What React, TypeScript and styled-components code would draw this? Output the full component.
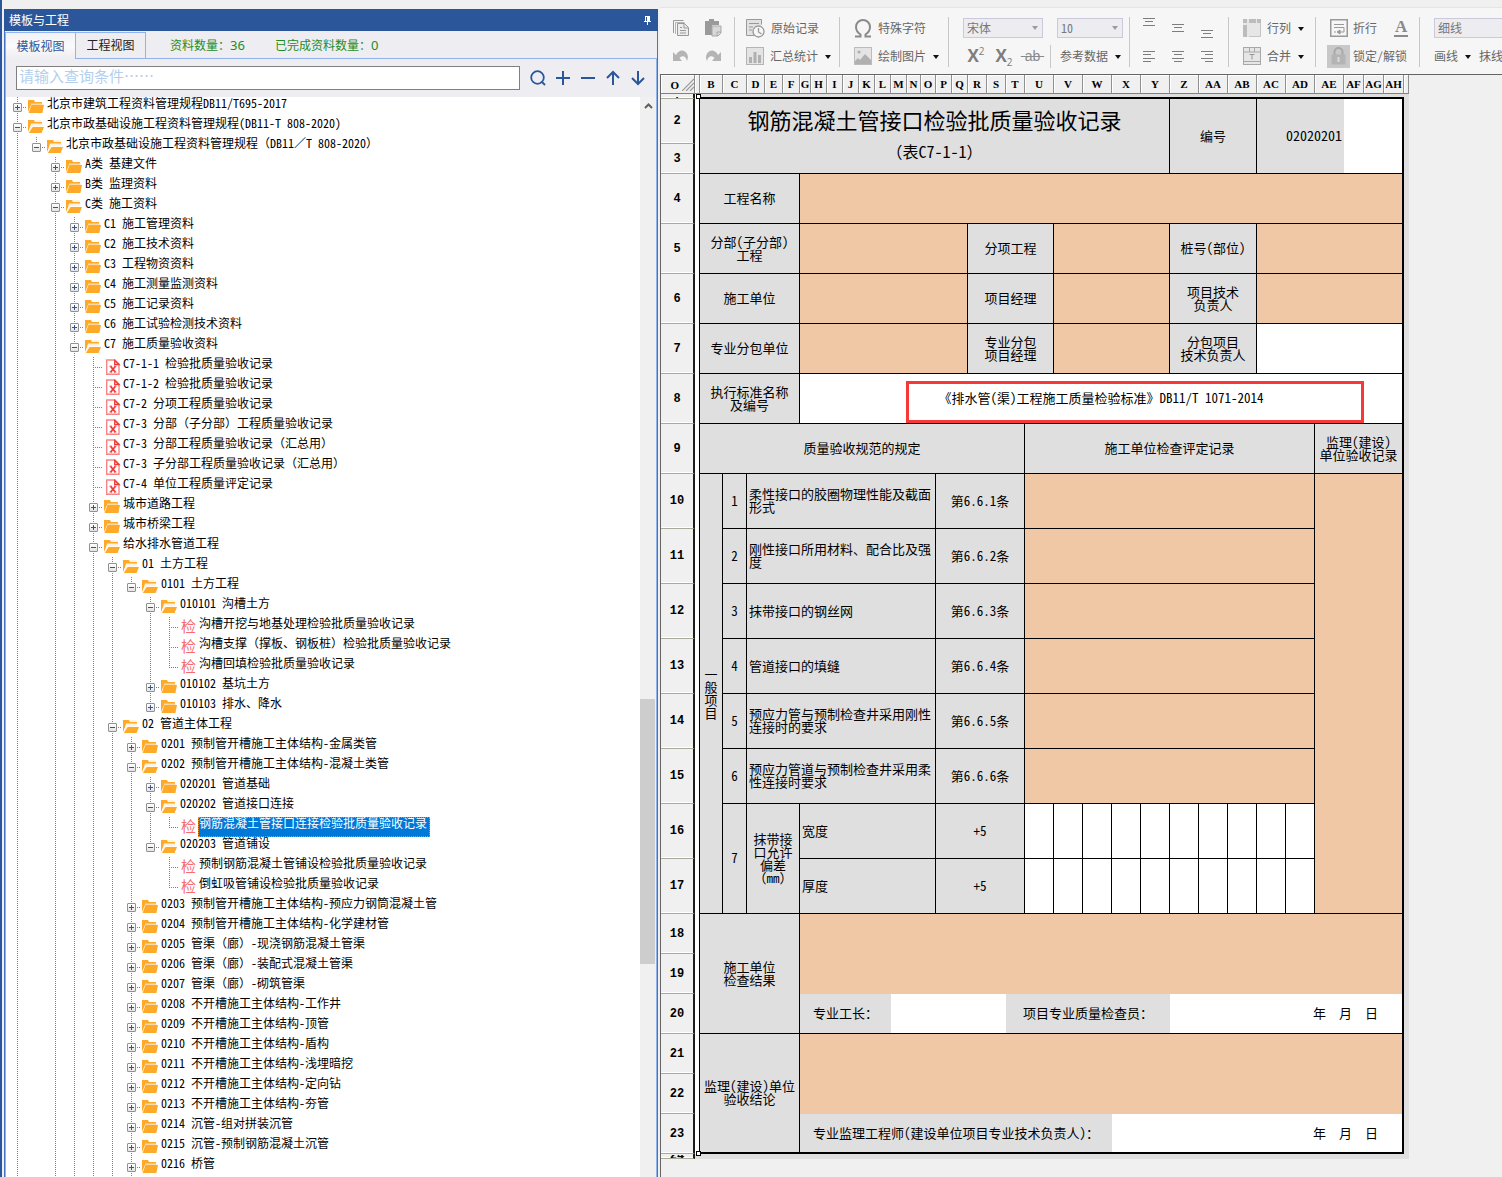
import React, { useState } from "react";
import styled, { createGlobalStyle, css } from "styled-components";

const sans = `"Noto Sans Mono CJK SC", "Noto Sans CJK SC", sans-serif`;
const blue = "#2b579a";
const lightBlue = "#8fb3ea";
const peach = "#f0c8a5";
const grey = "#dfdfdf";

const GlobalStyle = createGlobalStyle`
  *, *::before, *::after { box-sizing: border-box; }
  body { margin: 0; background: #f0f0f0; color: #000; font-family: ${sans}; font-size: 12px; overflow: hidden; }
  button, input, select { font: inherit; color: inherit; margin: 0; }
  button { border: 0; padding: 0; background: none; display: inline-flex; align-items: center; cursor: pointer; white-space: nowrap; }
  svg { display: block; flex: none; }
`;

/* ---------- shell ---------- */

const Shell = styled.div`
  display: grid;
  grid-template-columns: 658px minmax(0, 1fr);
  min-height: 100vh;
`;

const Side = styled.aside`
  display: flex;
  flex-direction: column;
  border-left: 2px solid ${blue};
  padding: 9px 0 0 2px;
  min-width: 0;
`;

const SideTitle = styled.header`
  display: flex;
  align-items: center;
  justify-content: space-between;
  height: 22px;
  padding: 0 6px 0 5px;
  background: ${blue};
  color: #fff;
  font-size: 12px;
`;

const PanelTitle = styled.h1`
  margin: 0;
  font-size: 12px;
  font-weight: 400;
  line-height: 20px;
`;

const SideBody = styled.div`
  flex: 1;
  display: flex;
  flex-direction: column;
  border: solid #4472c4;
  border-width: 0 1px;
  background: #eeeef2;
`;

const TabBar = styled.div`
  display: flex;
  height: 28px;
  padding-top: 1px;
  color: #1e8c1e;
`;

const Tab = styled.button<{ $active?: boolean }>`
  width: ${(p) => (p.$active ? 71 : 70)}px;
  justify-content: center;
  padding-bottom: 2px;
  border: 1px solid ${lightBlue};
  ${(p) =>
    p.$active
      ? css`
          color: ${blue};
          border-bottom: 0;
          background: linear-gradient(#f2f2f6, #fafafc 50%, #eeeef2);
        `
      : css`
          color: #222;
        `}
  & + & {
    border-left: 0;
  }
`;

const Stats = styled.div`
  flex: 1;
  display: flex;
  align-items: center;
  gap: 30px;
  padding-left: 24px;
  border-bottom: 1px solid ${lightBlue};
`;

const Stat = styled.span`
  line-height: 16px;
  white-space: nowrap;
  & > b {
    font: 400 13px/16px "Noto Sans", sans-serif;
  }
`;

const SearchRow = styled.div`
  display: flex;
  align-items: center;
  height: 38px;
  padding: 0 6px 0 10px;
  border-left: 1px solid ${lightBlue};
  border-right: 1px solid ${lightBlue};
`;

const SearchInput = styled.input`
  flex: 1;
  min-width: 0;
  height: 24px;
  margin-right: 5px;
  padding: 0 2px 6px;
  border: 1px solid #7f7f7f;
  border-radius: 0;
  background: #fff;
  font-size: 15px;
  line-height: 16px;
  outline: none;
  &::placeholder {
    color: #b4cfee;
    opacity: 1;
  }
`;

const SearchTool = styled.button`
  width: 25px;
  height: 24px;
  justify-content: center;
  color: ${blue};
`;

const TreeArea = styled.div`
  flex: 1;
  display: flex;
  border-left: 1px solid ${lightBlue};
  border-right: 1px solid ${lightBlue};
  background: #fff;
`;

const Tree = styled.ul`
  flex: 1;
  min-width: 0;
  margin: 0;
  padding: 0 0 0 2px;
  list-style: none;
`;

const ScrollTrack = styled.div`
  display: flex;
  flex-direction: column;
  width: 16px;
  background: #f0f0f0;
`;

const ScrollArrow = styled.button`
  justify-content: center;
  height: 18px;
  color: #606060;
`;

const TrackSpace = styled.div<{ $grow: number }>`
  flex: ${(p) => p.$grow} 0 0;
`;

const Thumb = styled(TrackSpace)`
  margin-right: 1px;
  background: #cdcdcd;
`;

/* ---------- tree ---------- */

const dotsDown = "repeating-linear-gradient(to bottom, #808080 0 1px, transparent 1px 2px)";
const dotsRight = "repeating-linear-gradient(to right, #808080 0 1px, transparent 1px 2px)";

const TreeRow = styled.li`
  display: flex;
  height: 20px;
  white-space: nowrap;
`;

const Guide = styled.span<{ $line: boolean }>`
  flex: 0 0 19px;
  background: ${(p) => (p.$line ? `${dotsDown} 9px 0 / 1px 100% no-repeat` : "none")};
`;

const Joint = styled.span<{ $last: boolean }>`
  flex: 0 0 19px;
  display: flex;
  align-items: flex-start;
  padding: 6px 0 0 5px;
  background: ${dotsDown} 9px 0 / 1px ${(p) => (p.$last ? "10px" : "100%")} no-repeat,
    ${dotsRight} 9px 10px / 10px 1px no-repeat;
`;

const Expander = styled.button`
  width: 9px;
  height: 9px;
  justify-content: center;
  border: 1px solid #919191;
  border-radius: 1px;
  background: linear-gradient(#fff, #e4e4e4);
  color: ${blue};
`;

const NodeIcon = styled.span`
  flex: 0 0 19px;
  padding: 2px 0 0 1px;
`;

const CheckMark = styled.span`
  display: block;
  padding-left: 1px;
  font-size: 15px;
  line-height: 14px;
  color: #f56c6c;
`;

const Label = styled.span<{ $selected?: boolean }>`
  height: 20px;
  padding: 0 3px 0 1px;
  line-height: 12px;
  ${(p) =>
    p.$selected &&
    css`
      background: #0078d7;
      color: #fff;
      outline: 1px dotted #f08a24;
      outline-offset: -1px;
    `}
`;

type Kind = "closed" | "open" | "file" | "check";
type Node = [level: number, kind: Kind, label: string];

const nodes: Node[] = [
  [0, "closed", "北京市建筑工程资料管理规程DB11/T695-2017"],
  [0, "open", "北京市政基础设施工程资料管理规程(DB11-T 808-2020)"],
  [1, "open", "北京市政基础设施工程资料管理规程（DB11／T 808-2020）"],
  [2, "closed", "A类 基建文件"],
  [2, "closed", "B类 监理资料"],
  [2, "open", "C类 施工资料"],
  [3, "closed", "C1 施工管理资料"],
  [3, "closed", "C2 施工技术资料"],
  [3, "closed", "C3 工程物资资料"],
  [3, "closed", "C4 施工测量监测资料"],
  [3, "closed", "C5 施工记录资料"],
  [3, "closed", "C6 施工试验检测技术资料"],
  [3, "open", "C7 施工质量验收资料"],
  [4, "file", "C7-1-1 检验批质量验收记录"],
  [4, "file", "C7-1-2 检验批质量验收记录"],
  [4, "file", "C7-2 分项工程质量验收记录"],
  [4, "file", "C7-3 分部（子分部）工程质量验收记录"],
  [4, "file", "C7-3 分部工程质量验收记录（汇总用）"],
  [4, "file", "C7-3 子分部工程质量验收记录（汇总用）"],
  [4, "file", "C7-4 单位工程质量评定记录"],
  [4, "closed", "城市道路工程"],
  [4, "closed", "城市桥梁工程"],
  [4, "open", "给水排水管道工程"],
  [5, "open", "01 土方工程"],
  [6, "open", "0101 土方工程"],
  [7, "open", "010101 沟槽土方"],
  [8, "check", "沟槽开挖与地基处理检验批质量验收记录"],
  [8, "check", "沟槽支撑（撑板、钢板桩）检验批质量验收记录"],
  [8, "check", "沟槽回填检验批质量验收记录"],
  [7, "closed", "010102 基坑土方"],
  [7, "closed", "010103 排水、降水"],
  [5, "open", "02 管道主体工程"],
  [6, "closed", "0201 预制管开槽施工主体结构-金属类管"],
  [6, "open", "0202 预制管开槽施工主体结构-混凝土类管"],
  [7, "closed", "020201 管道基础"],
  [7, "open", "020202 管道接口连接"],
  [8, "check", "钢筋混凝土管接口连接检验批质量验收记录"],
  [7, "open", "020203 管道铺设"],
  [8, "check", "预制钢筋混凝土管铺设检验批质量验收记录"],
  [8, "check", "倒虹吸管铺设检验批质量验收记录"],
  [6, "closed", "0203 预制管开槽施工主体结构-预应力钢筒混凝土管"],
  [6, "closed", "0204 预制管开槽施工主体结构-化学建材管"],
  [6, "closed", "0205 管渠（廊）-现浇钢筋混凝土管渠"],
  [6, "closed", "0206 管渠（廊）-装配式混凝土管渠"],
  [6, "closed", "0207 管渠（廊）-砌筑管渠"],
  [6, "closed", "0208 不开槽施工主体结构-工作井"],
  [6, "closed", "0209 不开槽施工主体结构-顶管"],
  [6, "closed", "0210 不开槽施工主体结构-盾构"],
  [6, "closed", "0211 不开槽施工主体结构-浅埋暗挖"],
  [6, "closed", "0212 不开槽施工主体结构-定向钻"],
  [6, "closed", "0213 不开槽施工主体结构-夯管"],
  [6, "closed", "0214 沉管-组对拼装沉管"],
  [6, "closed", "0215 沉管-预制钢筋混凝土沉管"],
  [6, "closed", "0216 桥管"],
];

// Levels that go on below the last visible row.
const openBelow = [0, 2, 3, 4, 5, 6];

function continues(index: number, level: number) {
  for (let i = index + 1; i < nodes.length; i++) {
    if (nodes[i][0] === level) return true;
    if (nodes[i][0] < level) return false;
  }
  return openBelow.includes(level);
}

function NodeGlyph({ kind }: { kind: Kind }) {
  if (kind === "check") return <CheckMark aria-hidden="true">检</CheckMark>;
  if (kind === "file")
    return (
      <svg width="17" height="16" viewBox="0 0 17 16" fill="none">
        <path d="M2.700 1H11l4 4v10.300H2.700z" stroke="#f78585" strokeWidth="1.4" />
        <path d="M10.700 1.500v4H15z" stroke="#ee3b3b" strokeWidth="1.3" />
        <path d="M6.700 7.500l4.600 5.500M11.300 7.500l-4.600 5.500" stroke="#ee3b3b" strokeWidth="1.8" />
        <path d="M5.500 7.200h2.600M10 7.200h2.400M5.500 13h2.600M10 13h2.400" stroke="#ee3b3b" />
      </svg>
    );
  return (
    <svg width="16" height="15" viewBox="0 0 16 15">
      <path d="M0 1h6l1 2h7v3H3L0 13z" fill="#ffa929" />
      {kind === "closed" ? (
        <>
          <path d="M3 5.2h12" stroke="#fde5c4" strokeWidth="1.2" />
          <path d="M3.400 6H16l-1.600 8H.6z" fill="#ffa929" />
        </>
      ) : (
        <>
          <path d="M6 1.500h7.500v1H7z" fill="#fde5c4" />
          <path d="M3 4.600h11.500v3H4L1 13z" fill="#fff3e0" />
          <path d="M4.600 8H16l-2.400 6H.8z" fill="#ffa929" />
        </>
      )}
    </svg>
  );
}

function ProjectTree() {
  const [selected, setSelected] = useState(36);
  return (
    <Tree role="tree" aria-label="模板视图">
      {nodes.map(([level, kind, label], i) => (
        <TreeRow key={i} role="treeitem" aria-level={level + 1} aria-selected={i === selected} onClick={() => setSelected(i)}>
          {Array.from({ length: level }, (_, l) => (
            <Guide key={l} $line={continues(i, l)} />
          ))}
          <Joint $last={!continues(i, level)}>
            {(kind === "closed" || kind === "open") && (
              <Expander aria-label={label}>
                <svg width="7" height="7" viewBox="0 0 7 7" stroke="currentColor">
                  <path d={kind === "closed" ? "M1 3.5h5M3.5 1v5" : "M1 3.5h5"} />
                </svg>
              </Expander>
            )}
          </Joint>
          <NodeIcon>
            <NodeGlyph kind={kind} />
          </NodeIcon>
          <Label $selected={i === selected}>{label}</Label>
        </TreeRow>
      ))}
    </Tree>
  );
}

/* ---------- toolbar ---------- */

const Main = styled.main`
  display: flex;
  flex-direction: column;
  padding: 7px 0 0 2px;
  min-width: 0;
  overflow: hidden;
`;

const Toolbar = styled.div`
  display: flex;
  height: 67px;
  padding: 6px 0 4px 1px;
  border-top: 1px solid #e4e4ee;
  background: #f6f6f6;
  color: #666;
  overflow: hidden;
`;

const Group = styled.div<{ $width: number; $pad?: number }>`
  flex: 0 0 ${(p) => p.$width}px;
  display: grid;
  grid-template-rows: 28px 28px;
  padding-left: ${(p) => p.$pad ?? 15}px;
  & + & {
    background: linear-gradient(#c8c8c8, #c8c8c8) 0 3px / 1px 50px no-repeat;
  }
`;

const ToolRow = styled.div<{ $gap?: number }>`
  display: flex;
  align-items: center;
  gap: ${(p) => p.$gap ?? 0}px;
`;

const Tool = styled.button<{ $gap?: number }>`
  gap: ${(p) => p.$gap ?? 6}px;
  line-height: 18px;
`;

const IconTool = styled.button<{ $width: number }>`
  width: ${(p) => p.$width}px;
  height: 28px;
  justify-content: center;
`;

const IconBox = styled.span<{ $on?: boolean }>`
  display: grid;
  place-items: center;
  width: 23px;
  height: 23px;
  background: ${(p) => (p.$on ? "#c8c8c8" : "none")};
`;

const OmegaIcon = () => (
  <svg width="18" height="19" viewBox="0 0 18 19" fill="none" stroke="#8a8a8a" strokeWidth="2">
    <path d="M1 17.500h5.500v-2C3.500 13.500 2 11 2 8a7 7 0 0114 0c0 3-1.500 5.500-4.500 7.500v2H17" />
  </svg>
);

const ScriptX = styled.span`
  font: 700 17px/18px "Open Sans", sans-serif;
  color: #7d7d7d;
  & > sup, & > sub { font-size: 10px; font-weight: 400; line-height: 0; }
`;

const Strike = styled.s`
  white-space: pre;
  font: 400 14px/18px "Liberation Sans", sans-serif;
  color: #8a8a8a;
`;

const FontColor = styled.span`
  width: 14px;
  border-bottom: 2px solid #8a8a8a;
  text-align: center;
  font: 700 17px/16px "Liberation Serif", serif;
  color: #8a8a8a;
`;

const Picker = styled.label<{ $width: number }>`
  position: relative;
  width: ${(p) => p.$width}px;
  & > svg {
    position: absolute;
    right: 5px;
    top: 8px;
    color: #9c9c9c;
    pointer-events: none;
  }
`;

const PickerSelect = styled.select`
  appearance: none;
  display: block;
  width: 100%;
  height: 20px;
  padding: 0 3px 2px;
  border: 1px solid #cacadc;
  border-radius: 0;
  background: #ededf1;
  color: #777;
`;

const Vertical = styled.span`
  align-self: center;
  width: 1px;
  height: 23px;
  margin: 0 9px 0 4px;
  background: #c8c8c8;
`;

const Caret = () => (
  <svg width="6" height="4" viewBox="0 0 6 4">
    <path d="M0 0h6L3 4z" fill="currentColor" />
  </svg>
);

const DarkCaret = styled.span`
  padding: 1px 0 0 1px;
  color: #111;
`;

const Drop = () => (
  <DarkCaret>
    <Caret />
  </DarkCaret>
);

const gray = "#999";

const CopyIcon = () => (
  <svg width="18" height="18" viewBox="0 0 18 18" fill="none" stroke={gray}>
    <path d="M1.500 14V1.500h10" />
    <path d="M3.500 15V3.500h9" stroke="#b5b5b5" />
    <path d="M5.500 4.500h7l4 4v8h-11z" fill="#ececec" />
    <path d="M12 4.500V9h4.500M8 8.500h2M8 11.500h6M8 14h6" />
  </svg>
);

const PasteIcon = () => (
  <svg width="18" height="18" viewBox="0 0 18 18">
    <path d="M1 2h4V0h5v2h5v4H8v10H1z" fill="#9a9a9a" />
    <path d="M8 7h9v7l-3 3H8z" fill="#d8d8d8" stroke="#a8a8a8" />
    <path d="M13 17v-4h4" fill="none" stroke="#a8a8a8" />
  </svg>
);

const TurnIcon = ({ flip }: { flip?: boolean }) => (
  <svg width="18" height="14" viewBox="0 0 18 14">
    <path
      transform={flip ? "translate(18 0) scale(-1 1)" : undefined}
      d="M1 3v9h9L7.500 9C10 6 14 6.500 15 12c3-6-2-12-7-10C6 2.800 5 4 4 6z"
      fill="#b4b4b4"
    />
  </svg>
);

const RecordIcon = () => (
  <svg width="19" height="19" viewBox="0 0 19 19" fill="none" stroke={gray}>
    <path d="M8 16.500H.5V.5h15v5" fill="#e2e2e2" />
    <path d="M3 4.500h10M3 8h4M3 11h3" />
    <circle cx="12.500" cy="12.500" r="5.500" fill="#f6f6f6" strokeWidth="1.300" />
    <path d="M12.500 9v4l3 2" strokeWidth="1.300" />
  </svg>
);

const ChartIcon = () => (
  <svg width="18" height="18" viewBox="0 0 18 18">
    <rect x=".5" y=".5" width="17" height="17" fill="#e4e4e4" stroke="#b4b4b4" />
    <path d="M3 10h3v6H3zM7.500 5h3v11h-3zM12 8h3v8h-3z" fill="#b0b0b0" />
  </svg>
);

const PictureIcon = () => (
  <svg width="18" height="18" viewBox="0 0 18 18">
    <rect x=".5" y=".5" width="17" height="17" fill="#e4e4e4" stroke="#bcbcbc" />
    <circle cx="5" cy="5" r="1.600" fill="#b0b0b0" />
    <path d="M1 14l3-3 2 2 5-6 6 6v4H1z" fill="#b0b0b0" />
  </svg>
);

const RowsIcon = () => (
  <svg width="18" height="18" viewBox="0 0 18 18">
    <rect width="18" height="18" fill="#e6e6e6" />
    <path d="M0 0h4v4H0zM6 0h7v4H6zM0 6h4v12H0zM14 0h4v4h-4z" fill="#bcbcbc" />
    <path d="M17.500 4v13.500H6" fill="none" stroke="#c4c4c4" />
  </svg>
);

const MergeIcon = () => (
  <svg width="18" height="18" viewBox="0 0 18 18">
    <rect x=".5" y=".5" width="17" height="17" fill="#e6e6e6" stroke="#a8a8a8" />
    <path d="M1 5h16M6.500 1v4M11.500 1v4M1 14.500h16" stroke="#a8a8a8" />
    <path d="M6.500 7.500h5M9 7.500v5" stroke="#999" />
  </svg>
);

const WrapIcon = () => (
  <svg width="18" height="18" viewBox="0 0 18 18" fill="none" stroke={gray}>
    <rect x=".75" y=".75" width="16.500" height="16.500" strokeWidth="1.500" />
    <path d="M4 5.500h10M4 8.500h10v4.500H9M4 13h2" />
    <path d="M10 11l-3 2 3 2z" fill={gray} />
  </svg>
);

const LockIcon = () => (
  <svg width="17" height="18" viewBox="0 0 17 18">
    <path d="M4.500 8V5a4 4 0 018 0v3" fill="none" stroke="#a8a8a8" strokeWidth="2" />
    <rect x="1.500" y="7.500" width="14" height="10" fill="#b4b4b4" />
    <path d="M8.500 10v5" stroke="#dadada" strokeWidth="2" />
  </svg>
);

const lineSets: Record<string, string> = {
  top: "M0 .5h12M2 3.500h8M0 7.500h12",
  left: "M0 .5h12M0 3.500h8M0 7.500h12M0 10.500h8",
  middle: "M0 .5h12M2 3.500h8M0 7.500h12M2 10.500h8",
  right: "M0 .5h12M4 3.500h8M0 7.500h12M4 10.500h8",
};

const Lines = ({ set }: { set: string }) => (
  <svg width="12" height={set === "top" ? 8 : 11} viewBox={set === "top" ? "0 0 12 8" : "0 0 12 11"} stroke="#7d7d7d">
    <path d={lineSets[set]} />
  </svg>
);

const AlignTool = styled(IconTool)<{ $at?: string }>`
  align-items: ${(p) => p.$at ?? "center"};
  padding: ${(p) => (p.$at ? "4px 0" : "0")};
`;

function EditorToolbar() {
  return (
    <Toolbar role="toolbar">
      <Group $width={73} $pad={4}>
        <ToolRow>
          <IconTool $width={32} aria-label="复制"><CopyIcon /></IconTool>
          <IconTool $width={32} aria-label="粘贴"><PasteIcon /></IconTool>
        </ToolRow>
        <ToolRow>
          <IconTool $width={32} aria-label="撤销"><TurnIcon /></IconTool>
          <IconTool $width={32} aria-label="重做"><TurnIcon flip /></IconTool>
        </ToolRow>
      </Group>
      <Group $width={105} $pad={12}>
        <Tool><RecordIcon />原始记录</Tool>
        <Tool><ChartIcon />汇总统计<Drop /></Tool>
      </Group>
      <Group $width={109}>
        <Tool><OmegaIcon />特殊字符</Tool>
        <Tool><PictureIcon />绘制图片<Drop /></Tool>
      </Group>
      <Group $width={181}>
        <ToolRow $gap={14}>
          <Picker $width={80}>
            <PickerSelect aria-label="字体"><option>宋体</option></PickerSelect>
            <Caret />
          </Picker>
          <Picker $width={66}>
            <PickerSelect aria-label="字号"><option>10</option></PickerSelect>
            <Caret />
          </Picker>
        </ToolRow>
        <ToolRow>
          <IconTool $width={26} aria-label="上标"><ScriptX>X<sup>2</sup></ScriptX></IconTool>
          <IconTool $width={30} aria-label="下标"><ScriptX>X<sub>2</sub></ScriptX></IconTool>
          <IconTool $width={27} aria-label="删除线"><Strike>{"\u00a0ab\u00a0"}</Strike></IconTool>
          <Vertical />
          <Tool>参考数据<Drop /></Tool>
        </ToolRow>
      </Group>
      <Group $width={99} $pad={5}>
        <ToolRow>
          <AlignTool $width={29} $at="flex-start" aria-label="顶端对齐"><Lines set="top" /></AlignTool>
          <AlignTool $width={29} $at="center" aria-label="垂直居中"><Lines set="top" /></AlignTool>
          <AlignTool $width={29} $at="flex-end" aria-label="底端对齐"><Lines set="top" /></AlignTool>
        </ToolRow>
        <ToolRow>
          <AlignTool $width={29} aria-label="左对齐"><Lines set="left" /></AlignTool>
          <AlignTool $width={29} aria-label="居中"><Lines set="middle" /></AlignTool>
          <AlignTool $width={29} aria-label="右对齐"><Lines set="right" /></AlignTool>
        </ToolRow>
      </Group>
      <Group $width={87}>
        <Tool><RowsIcon />行列<Drop /></Tool>
        <Tool><MergeIcon />合并<Drop /></Tool>
      </Group>
      <Group $width={104} $pad={12}>
        <ToolRow $gap={17}>
          <Tool $gap={3}><IconBox><WrapIcon /></IconBox>折行</Tool>
          <Tool aria-label="字体颜色"><FontColor>A</FontColor></Tool>
        </ToolRow>
        <Tool $gap={3}><IconBox $on><LockIcon /></IconBox>锁定/解锁</Tool>
      </Group>
      <Group $width={160}>
        <ToolRow>
          <Picker $width={120}>
            <PickerSelect aria-label="线型"><option>细线</option></PickerSelect>
            <Caret />
          </Picker>
        </ToolRow>
        <ToolRow $gap={8}>
          <Tool>画线<Drop /></Tool>
          <Tool>抹线<Drop /></Tool>
        </ToolRow>
      </Group>
    </Toolbar>
  );
}

/* ---------- sheet ---------- */

const SheetArea = styled.div`
  position: relative;
  flex: 1;
  border-top: 1px solid #646464;
  border-left: 1px solid #646464;
`;

const Sheet = styled.table`
  table-layout: fixed;
  width: 748px;
  border-collapse: separate;
  border-spacing: 0;
  font-size: 13px;
  line-height: 13px;
`;

const Row = styled.tr<{ $height: number }>`
  height: ${(p) => p.$height}px;
`;

const HeadCell = styled.th`
  padding: 0;
  border-right: 1px solid #909090;
  border-bottom: 1px solid #808080;
  box-shadow: inset 1px 1px #fff;
  background: #f0f0f0;
  font: 700 11px/12px "Liberation Serif", serif;
`;

const RowHead = styled.th`
  padding: 0;
  border-right: 2px solid #1c1c1c;
  border-bottom: 1px solid #a9a99c;
  box-shadow: inset 0 -1px #fff;
  background: #f0f0f0;
  font: 700 12px/12px "Liberation Mono", monospace;
`;

const Clip = styled.div`
  height: 3px;
  line-height: 3px;
  overflow: hidden;
`;

const CornerBox = styled.div`
  display: flex;
  align-items: flex-end;
  justify-content: flex-end;
  gap: 3px;
`;

const Margin = styled.td`
  padding: 0;
  border-right: 1px solid #000;
  background: #fff;
`;

const Edge = styled.td`
  padding: 0;
  background: ${grey};
`;

type CellProps = {
  $fill?: "peach" | "white";
  $align?: "left" | "right";
  $noRight?: boolean;
  $noBottom?: boolean;
  $thickRight?: boolean;
  $thickBottom?: boolean;
  $padRight?: number;
};

const Cell = styled.td<CellProps>`
  position: relative;
  padding: 0 ${(p) => p.$padRight ?? 2}px 2px 2px;
  border: 0 solid #000;
  border-right-width: ${(p) => (p.$thickRight ? 2 : p.$noRight ? 0 : 1)}px;
  border-bottom-width: ${(p) => (p.$thickBottom ? 2 : p.$noBottom ? 0 : 1)}px;
  background: ${(p) => (p.$fill === "peach" ? peach : p.$fill === "white" ? "#fff" : grey)};
  text-align: ${(p) => p.$align ?? "center"};
  white-space: pre-wrap;
`;

const FormTitle = styled.div`
  font-size: 22px;
  line-height: 32px;
`;

const FormCode = styled.div`
  font-size: 16px;
  line-height: 32px;
`;

const Serial = styled.span`
  font-size: 14px;
`;

const Highlight = styled.div`
  position: absolute;
  inset: 7px 38px 0 106px;
  border: 3px solid #f83838;
`;

const Handle = styled.i<{ $bottom?: boolean }>`
  position: absolute;
  left: 35px;
  ${(p) => (p.$bottom ? "top: 1076px;" : "top: 19px;")}
  width: 5px;
  height: 5px;
  border: 1px solid #000;
  background: #fff;
`;

const columns: [string, number][] = [
  ["", 5], ["B", 23], ["C", 24], ["D", 18], ["E", 18], ["F", 17], ["G", 11], ["H", 16], ["I", 16],
  ["J", 16], ["K", 16], ["L", 16], ["M", 16], ["N", 14], ["O", 15], ["P", 16], ["Q", 16], ["R", 19],
  ["S", 19], ["T", 19], ["U", 29], ["V", 29], ["W", 29], ["X", 29], ["Y", 29], ["Z", 29], ["AA", 29],
  ["AB", 29], ["AC", 29], ["AD", 29], ["AE", 29], ["AF", 20], ["AG", 20], ["AH", 20], ["", 5],
];

const Line = ({ n, height, children }: { n: number; height: number; children?: React.ReactNode }) => (
  <Row $height={height}>
    <RowHead scope="row">{n}</RowHead>
    <Margin />
    {children}
    <Edge />
  </Row>
);

const people: [number, string, string, string][] = [
  [5, "分部(子分部)\n工程", "分项工程", "桩号(部位)"],
  [6, "施工单位", "项目经理", "项目技术\n负责人"],
  [7, "专业分包单位", "专业分包\n项目经理", "分包项目\n技术负责人"],
];

const rules: string[] = [
  "柔性接口的胶圈物理性能及截面形式",
  "刚性接口所用材料、配合比及强度",
  "抹带接口的钢丝网",
  "管道接口的填缝",
  "预应力管与预制检查井采用刚性连接时的要求",
  "预应力管道与预制检查井采用柔性连接时要求",
];

const Blanks = () => (
  <>
    {Array.from({ length: 10 }, (_, i) => (
      <Cell key={i} $fill="white" />
    ))}
  </>
);

function FormSheet() {
  return (
    <SheetArea>
      <Sheet>
        <colgroup>
          <col style={{ width: 34 }} />
          {columns.map(([, width], i) => (
            <col key={i} style={{ width }} />
          ))}
        </colgroup>
        <thead>
          <Row $height={19}>
            <HeadCell>
              <CornerBox>
                O
                <svg width="12" height="13" viewBox="0 0 12 13" stroke="#999" strokeWidth="1.2">
                  <path d="M0 13L12 1M4 13l8-8M8 13l4-4" />
                </svg>
              </CornerBox>
            </HeadCell>
            {columns.map(([name], i) => (
              <HeadCell key={i} scope="col">{name}</HeadCell>
            ))}
          </Row>
        </thead>
        <tbody>
          <Row $height={5}>
            <RowHead scope="row"><Clip>.</Clip></RowHead>
            <Margin />
            <Cell colSpan={33} $thickBottom $noRight />
            <Edge />
          </Row>
          <Line n={2} height={45}>
            <Cell colSpan={24} rowSpan={2}>
              <FormTitle>钢筋混凝土管接口检验批质量验收记录</FormTitle>
              <FormCode>（表C7-1-1）</FormCode>
            </Cell>
            <Cell colSpan={3} rowSpan={2}>编号</Cell>
            <Cell colSpan={3} rowSpan={2} $align="right" $noRight><Serial>02020201</Serial></Cell>
            <Cell colSpan={3} rowSpan={2} $fill="white" $thickRight />
          </Line>
          <Line n={3} height={30} />
          <Line n={4} height={50}>
            <Cell colSpan={5}>工程名称</Cell>
            <Cell colSpan={28} $fill="peach" $thickRight />
          </Line>
          {people.map(([n, a, b, c]) => (
            <Line key={n} n={n} height={50}>
              <Cell colSpan={5}>{a}</Cell>
              <Cell colSpan={11} $fill="peach" />
              <Cell colSpan={4}>{b}</Cell>
              <Cell colSpan={4} $fill="peach" />
              <Cell colSpan={3}>{c}</Cell>
              <Cell colSpan={6} $fill={n === 7 ? "white" : "peach"} $thickRight />
            </Line>
          ))}
          <Line n={8} height={50}>
            <Cell colSpan={5}>{"执行标准名称\n及编号"}</Cell>
            <Cell colSpan={28} $fill="white" $thickRight>
              《排水管(渠)工程施工质量检验标准》DB11/T 1071-2014
              <Highlight />
            </Cell>
          </Line>
          <Line n={9} height={50}>
            <Cell colSpan={19}>质量验收规范的规定</Cell>
            <Cell colSpan={10}>施工单位检查评定记录</Cell>
            <Cell colSpan={4} $thickRight>{"监理(建设)\n单位验收记录"}</Cell>
          </Line>
          {rules.map((rule, i) => (
            <Line key={i} n={10 + i} height={55}>
              {i === 0 && <Cell rowSpan={8}>{"一\n般\n项\n目"}</Cell>}
              <Cell>{i + 1}</Cell>
              <Cell colSpan={12} $align="left">{rule}</Cell>
              <Cell colSpan={5}>{`第6.6.${i + 1}条`}</Cell>
              <Cell colSpan={10} $fill="peach" />
              {i === 0 && <Cell colSpan={4} rowSpan={8} $fill="peach" $thickRight />}
            </Line>
          ))}
          <Line n={16} height={55}>
            <Cell rowSpan={2}>7</Cell>
            <Cell colSpan={3} rowSpan={2}>抹带接口允许偏差（mm）</Cell>
            <Cell colSpan={9} $align="left">宽度</Cell>
            <Cell colSpan={5}>+5</Cell>
            <Blanks />
          </Line>
          <Line n={17} height={55}>
            <Cell colSpan={9} $align="left">厚度</Cell>
            <Cell colSpan={5}>+5</Cell>
            <Blanks />
          </Line>
          <Line n={18} height={40}>
            <Cell colSpan={5} rowSpan={3}>{"施工单位\n检查结果"}</Cell>
            <Cell colSpan={28} rowSpan={2} $fill="peach" $noBottom $thickRight />
          </Line>
          <Line n={19} height={40} />
          <Line n={20} height={40}>
            <Cell colSpan={6} $noRight>专业工长：</Cell>
            <Cell colSpan={7} $fill="white" $noRight />
            <Cell colSpan={6} $noRight>项目专业质量检查员：</Cell>
            <Cell colSpan={9} $fill="white" $align="right" $padRight={24} $thickRight>年  月  日</Cell>
          </Line>
          <Line n={21} height={40}>
            <Cell colSpan={5} rowSpan={3} $thickBottom>{"监理(建设)单位\n验收结论"}</Cell>
            <Cell colSpan={28} rowSpan={2} $fill="peach" $noBottom $thickRight />
          </Line>
          <Line n={22} height={40} />
          <Line n={23} height={40}>
            <Cell colSpan={17} $noRight $thickBottom>专业监理工程师(建设单位项目专业技术负责人)：</Cell>
            <Cell colSpan={11} $fill="white" $align="right" $padRight={24} $thickRight $thickBottom>年  月  日</Cell>
          </Line>
          <Row $height={5}>
            <RowHead scope="row"><Clip>24</Clip></RowHead>
            <Edge colSpan={35} />
          </Row>
        </tbody>
      </Sheet>
      <Handle />
      <Handle $bottom />
    </SheetArea>
  );
}

/* ---------- app ---------- */

export default function App() {
  const stroke = { fill: "none", stroke: "currentColor", strokeWidth: 2 };
  return (
    <Shell>
      <GlobalStyle />
      <Side>
        <SideTitle>
          <PanelTitle>模板与工程</PanelTitle>
          <svg width="9" height="9" viewBox="0 0 9 9" fill="#fff">
            <path d="M1 0h6v5h1v1H5v3H4V6H1V5h1V0zM3 1v4h1V1z" fillRule="evenodd" />
          </svg>
        </SideTitle>
        <SideBody>
          <TabBar>
            <Tab $active>模板视图</Tab>
            <Tab>工程视图</Tab>
            <Stats>
              <Stat>资料数量：<b>36</b></Stat>
              <Stat>已完成资料数量：<b>0</b></Stat>
            </Stats>
          </TabBar>
          <SearchRow>
            <SearchInput type="text" aria-label="查询条件" placeholder="请输入查询条件……" />
            <SearchTool aria-label="搜索">
              <svg width="16" height="16" viewBox="0 0 16 16" {...stroke} strokeWidth={1.8}>
                <circle cx="7.500" cy="7.500" r="6.300" />
                <path d="M11.500 11.500l3.500 3.500" />
              </svg>
            </SearchTool>
            <SearchTool aria-label="展开">
              <svg width="16" height="16" viewBox="0 0 16 16" {...stroke}><path d="M8 1v14M1 8h14" /></svg>
            </SearchTool>
            <SearchTool aria-label="收起">
              <svg width="16" height="16" viewBox="0 0 16 16" {...stroke}><path d="M1 8h14" /></svg>
            </SearchTool>
            <SearchTool aria-label="上一个">
              <svg width="16" height="16" viewBox="0 0 16 16" {...stroke}><path d="M8 15V2M2 8l6-6 6 6" /></svg>
            </SearchTool>
            <SearchTool aria-label="下一个">
              <svg width="16" height="16" viewBox="0 0 16 16" {...stroke}><path d="M8 1v13M2 8l6 6 6-6" /></svg>
            </SearchTool>
          </SearchRow>
          <TreeArea>
            <ProjectTree />
            <ScrollTrack>
              <ScrollArrow aria-label="向上滚动">
                <svg width="9" height="6" viewBox="0 0 9 6" fill="none" stroke="currentColor" strokeWidth="2">
                  <path d="M1 5l3.500-3.500L8 5" />
                </svg>
              </ScrollArrow>
              <TrackSpace $grow={584} />
              <Thumb $grow={265} />
              <TrackSpace $grow={213} />
            </ScrollTrack>
          </TreeArea>
        </SideBody>
      </Side>
      <Main>
        <EditorToolbar />
        <FormSheet />
      </Main>
    </Shell>
  );
}
